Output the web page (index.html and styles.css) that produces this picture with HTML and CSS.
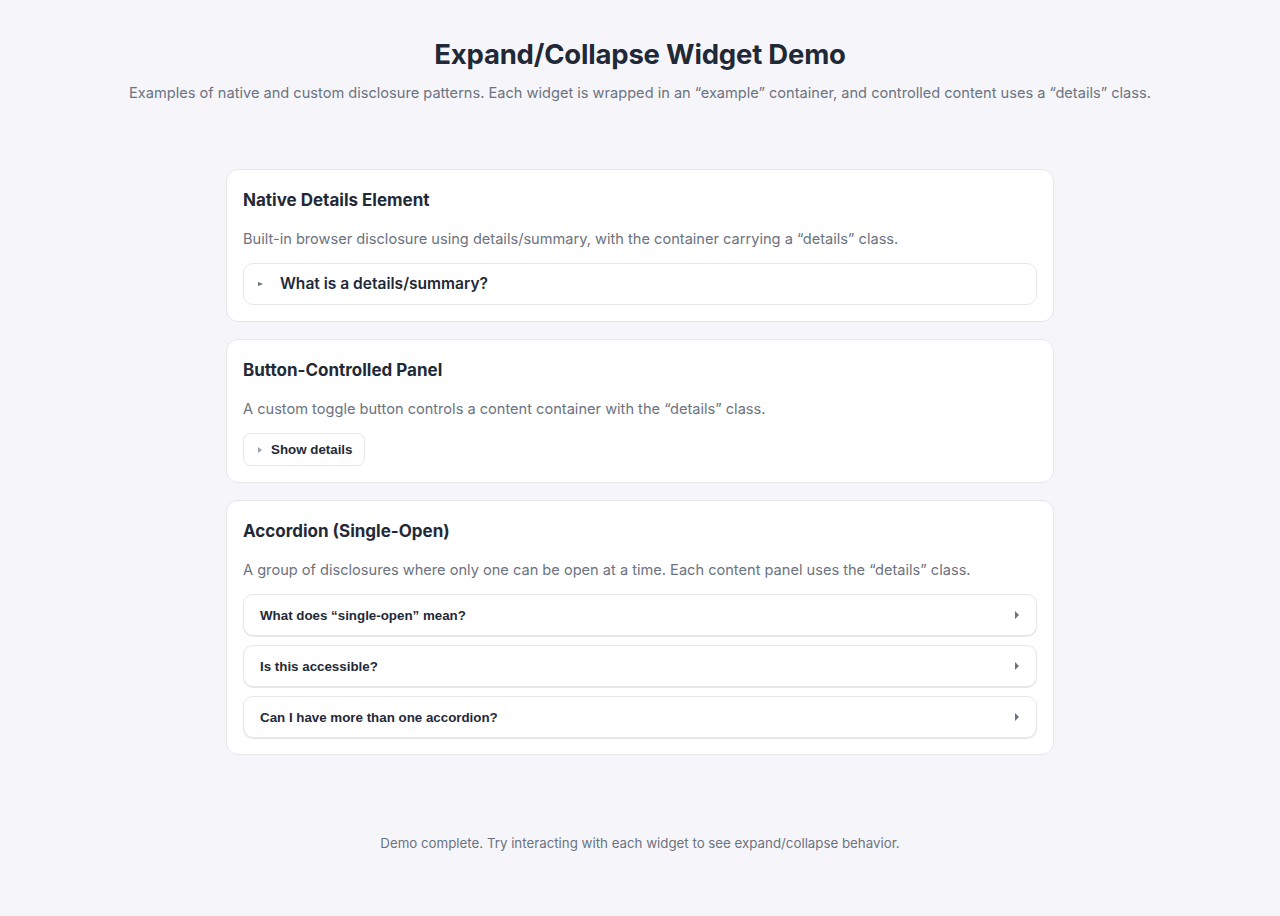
FILE: index.html
```
<!DOCTYPE html>
<html lang="en">
<head>
<meta charset="utf-8">
<title>Expand/Collapse Widget Demo</title>
<link rel="stylesheet" href="styles.css">
</head>
<body>
<header class="page-header">
  <h1 class="title">Expand/Collapse Widget Demo</h1>
  <p class="subtitle">Examples of native and custom disclosure patterns. Each widget is wrapped in an “example” container, and controlled content uses a “details” class.</p>
</header>
<main class="examples">
  <section class="example">
    <h2 class="example-title">Native Details Element</h2>
    <p class="example-desc">Built-in browser disclosure using details/summary, with the container carrying a “details” class.</p>
    <details class="details native">
      <summary class="native-summary">What is a details/summary?</summary>
      <p>The details element creates a disclosure widget.</p>
    </details>
  </section>
  <section class="example">
    <h2 class="example-title">Button-Controlled Panel</h2>
    <p class="example-desc">A custom toggle button controls a content container with the “details” class.</p>
    <button class="toggle-btn" type="button" aria-expanded="false"><span class="tri tri-light"></span>Show details</button>
  </section>
  <section class="example">
    <h2 class="example-title">Accordion (Single-Open)</h2>
    <p class="example-desc">A group of disclosures where only one can be open at a time. Each content panel uses the “details” class.</p>
    <div class="accordion">
      <button class="acc-item" type="button"><span>What does “single-open” mean?</span><span class="tri"></span></button>
      <button class="acc-item" type="button"><span>Is this accessible?</span><span class="tri"></span></button>
      <button class="acc-item" type="button"><span>Can I have more than one accordion?</span><span class="tri"></span></button>
    </div>
  </section>
</main>
<footer class="page-footer">Demo complete. Try interacting with each widget to see expand/collapse behavior.</footer>
</body>
</html>
```
FILE: styles.css
```
* { box-sizing: border-box; }
html, body { margin: 0; padding: 0; }
body {
  background: #f6f6fa;
  font-family: Inter, "Noto Sans", sans-serif;
  color: #1f2937;
  min-height: 916px;
}
.page-header {
  text-align: center;
  padding-top: 37px;
}
.title {
  margin: 0;
  font-size: 27.5px;
  line-height: 34px;
  font-weight: 700;
  color: #1f2937;
  letter-spacing: -0.2px;
}
.subtitle {
  margin: 11px 0 0;
  font-size: 14.6px;
  line-height: 22px;
  color: #6b7280;
}
.examples {
  width: 828px;
  margin: 65px auto 0;
  display: flex;
  flex-direction: column;
  gap: 17px;
}
.example {
  background: #fff;
  border: 1px solid #e5e7eb;
  border-radius: 12px;
  padding: 16px;
}
.example-title {
  margin: 0 0 13px;
  font-size: 17px;
  line-height: 28px;
  font-weight: 700;
  color: #1f2937;
}
.example-desc {
  margin: 0 0 12px;
  font-size: 14.6px;
  line-height: 24px;
  color: #6b7280;
}
.details.native {
  border: 1px solid #e5e7eb;
  border-radius: 10px;
}
.native-summary {
  list-style: none;
  display: flex;
  align-items: center;
  padding: 10px 14px;
  font-size: 15.55px;
  line-height: 20px;
  font-weight: 600;
  color: #1f2937;
  cursor: pointer;
}
.native-summary::-webkit-details-marker { display: none; }
.native-summary::before {
  content: "";
  width: 0;
  height: 0;
  border-top: 2.5px solid transparent;
  border-bottom: 2.5px solid transparent;
  border-left: 5px solid #6b7280;
  margin-right: 17px;
  flex: none;
}
.tri {
  display: inline-block;
  width: 0;
  height: 0;
  border-top: 4px solid transparent;
  border-bottom: 4px solid transparent;
  border-left: 4px solid #6b7280;
  flex: none;
}
.tri-light { border-left-color: #9ca3af; border-top-width: 3.5px; border-bottom-width: 3.5px; }
.toggle-btn {
  display: inline-flex;
  align-items: center;
  gap: 9px;
  height: 33px;
  padding: 0 12px 0 14px;
  background: #fff;
  border: 1px solid #e5e7eb;
  border-radius: 8px;
  font-family: "Liberation Sans", Arial, sans-serif;
  font-size: 13.333px;
  font-weight: 700;
  color: #1f2937;
  cursor: pointer;
}
.accordion {
  display: flex;
  flex-direction: column;
  gap: 9px;
}
.acc-item {
  display: flex;
  align-items: center;
  justify-content: space-between;
  width: 100%;
  height: 42px;
  padding: 0 17px 0 16px;
  background: #fff;
  border: 1px solid #e5e7eb;
  border-radius: 10px;
  box-shadow: 0 1px 0 #e5e7eb;
  font-family: "Liberation Sans", Arial, sans-serif;
  font-size: 13.333px;
  font-weight: 700;
  color: #1f2937;
  text-align: left;
  cursor: pointer;
}
.page-footer {
  margin-top: 78px;
  text-align: center;
  font-size: 13.3px;
  line-height: 20px;
  color: #6b7280;
}
```
